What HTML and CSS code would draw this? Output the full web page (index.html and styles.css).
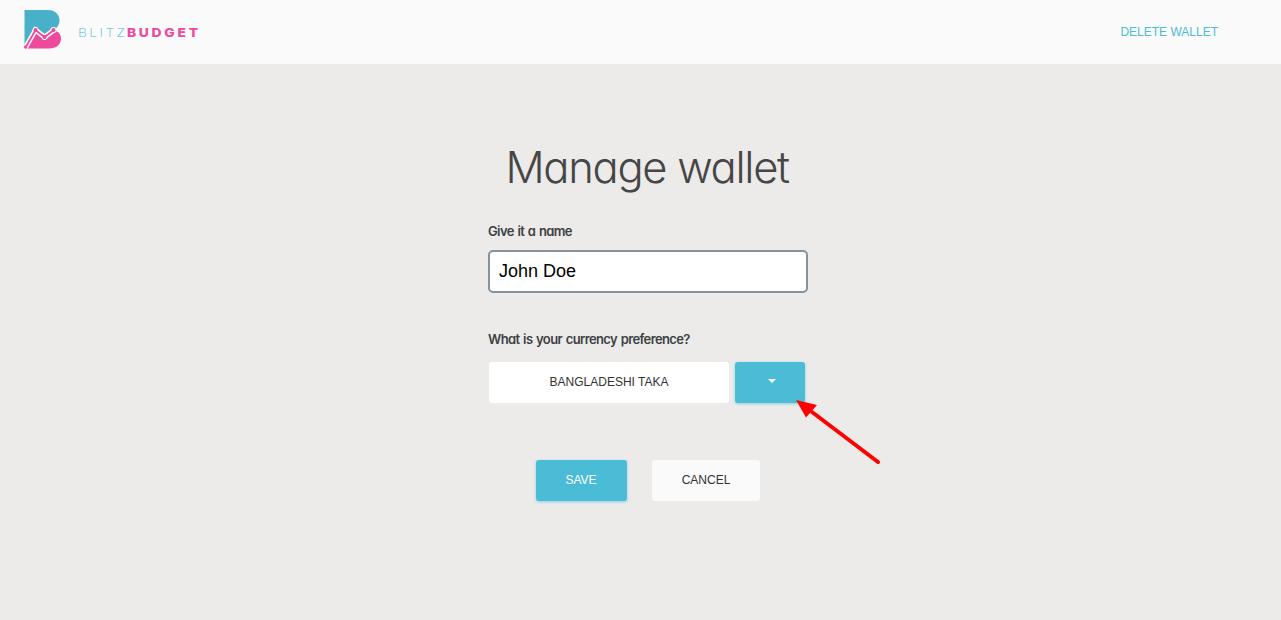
FILE: index.html
```html
<!DOCTYPE html>
<html lang="en">
<head>
<meta charset="utf-8">
<title>BlitzBudget - Manage wallet</title>
<link rel="stylesheet" href="styles.css">
</head>
<body>
<header class="topbar">
  <a class="brand">
    <svg class="brand-mark" width="38" height="39" viewBox="0 0 38 39">
      <path fill="#48b1c9" d="M.5 0H24C31 0 35.500 4.500 35.500 10.500C35.500 14 34 17 31 19L21 28L12 22L.5 37Z"/>
      <path fill="#ed4a9e" d="M3 38.500L12 21L20.500 29L30 20.500C35 21.500 37 25 37 28.500C37 34.500 32.500 38.500 25 38.500Z"/>
      <path fill="none" stroke="#fafafa" stroke-width="5" d="M1.500 37.500L11.500 20L20.500 27L30 20"/>
      <g fill="#fafafa"><circle cx="11.500" cy="20" r="3"/><circle cx="20.500" cy="27" r="3"/><circle cx="29.500" cy="20" r="3"/></g>
      <path fill="none" stroke="#ed4a9e" stroke-width="1.800" d="M1.500 37.500L11.500 20L20.500 27L30 20"/>
      <g fill="#ed4a9e"><circle cx="1.700" cy="37" r="1.700"/><circle cx="11.500" cy="20" r="2"/><circle cx="20.500" cy="27" r="2"/><circle cx="29.500" cy="20" r="2"/></g>
    </svg>
    <span class="brand-name"><span class="brand-light">BLITZ</span><span class="brand-bold">BUDGET</span></span>
  </a>
  <a class="delete-link">DELETE WALLET</a>
</header>
<main class="wallet">
  <h1 class="title">Manage wallet</h1>
  <label class="label label-name" for="name">Give it a name</label>
  <input class="name-input" id="name" type="text" value="John Doe">
  <div class="label label-currency">What is your currency preference?</div>
  <div class="currency">
    <button class="btn btn-white">BANGLADESHI TAKA</button>
    <button class="btn btn-primary btn-toggle" aria-label="Choose currency"><span class="caret"></span></button>
  </div>
  <div class="actions">
    <button class="btn btn-primary btn-save">SAVE</button>
    <button class="btn btn-cancel">CANCEL</button>
  </div>
</main>
<svg class="pointer" width="88" height="68" viewBox="0 0 88 68">
  <path stroke="#f00" stroke-width="4" stroke-linecap="round" d="M16 13L82 63"/>
  <path fill="#f00" d="M0 1L21 6L10 18.500Z"/>
</svg>
</body>
</html>
```
FILE: styles.css
```css
* { box-sizing: border-box; }
body {
  margin: 0;
  min-height: 620px;
  background: #ecebe9;
  color: #3c4142;
  font-family: "Liberation Sans", Arial, sans-serif;
}
.topbar {
  display: flex;
  justify-content: space-between;
  height: 64px;
  padding: 0 63px 0 24px;
  background: #fafafa;
}
.brand { display: flex; padding-top: 10px; }
.brand-name {
  display: flex;
  margin: 14px 0 0 16px;
  font: 12px/17px Inter, sans-serif;
  transform: scaleX(1.15);
  transform-origin: left;
}
.brand-light { width: 42.5px; color: #48bdd2; font-weight: 200; letter-spacing: 2.1px; }
.brand-bold { color: #ed4a9e; font-weight: 800; letter-spacing: 2.4px; }
.delete-link { color: #4bbcd6; font-size: 12px; line-height: 64px; }
.wallet {
  display: flex;
  flex-direction: column;
  width: 320px;
  margin-left: 488px;
  padding-top: 73px;
}
.title {
  margin: 0;
  padding-left: 17.5px;
  color: #464646;
  font: 350 43.5px/60px Inter, sans-serif;
  font-feature-settings: "cv11";
  letter-spacing: -1.3px;
  white-space: nowrap;
}
.label {
  font: 600 13px/20px Inter, sans-serif;
  font-feature-settings: "cv11";
  letter-spacing: -0.62px;
  word-spacing: 1px;
  white-space: nowrap;
}
.label-name { margin-top: 24px; }
.name-input {
  width: 320px;
  height: 43px;
  margin-top: 9px;
  padding: 0 9px;
  border: 2px solid #83929c;
  border-radius: 5px;
  background: #fff;
  color: #000;
  font: 18px "Liberation Sans", Arial, sans-serif;
}
.label-currency { margin-top: 36px; }
.currency { display: flex; gap: 6px; margin: 13px 0 0 1px; }
.btn {
  height: 41px;
  padding: 0 0 1px;
  border: 0;
  border-radius: 3px;
  color: #333;
  font: 12px "Liberation Sans", Arial, sans-serif;
}
.btn-white { width: 240px; background: #fff; }
.btn-primary { background: #4bbcd6; color: #fff; box-shadow: 0 1px 3px rgba(75, 188, 214, 0.6); }
.btn-toggle { display: flex; justify-content: center; width: 70px; padding: 17px 0 0 3px; }
.caret { border: 4px solid transparent; border-top-color: #fff; border-bottom: 0; }
.actions { display: flex; gap: 25px; margin: 57px 0 0 48px; }
.btn-save { width: 91px; padding-right: 1px; }
.btn-cancel { width: 108px; background: #fafafa; }
.pointer { position: absolute; left: 796px; top: 399px; }
```
